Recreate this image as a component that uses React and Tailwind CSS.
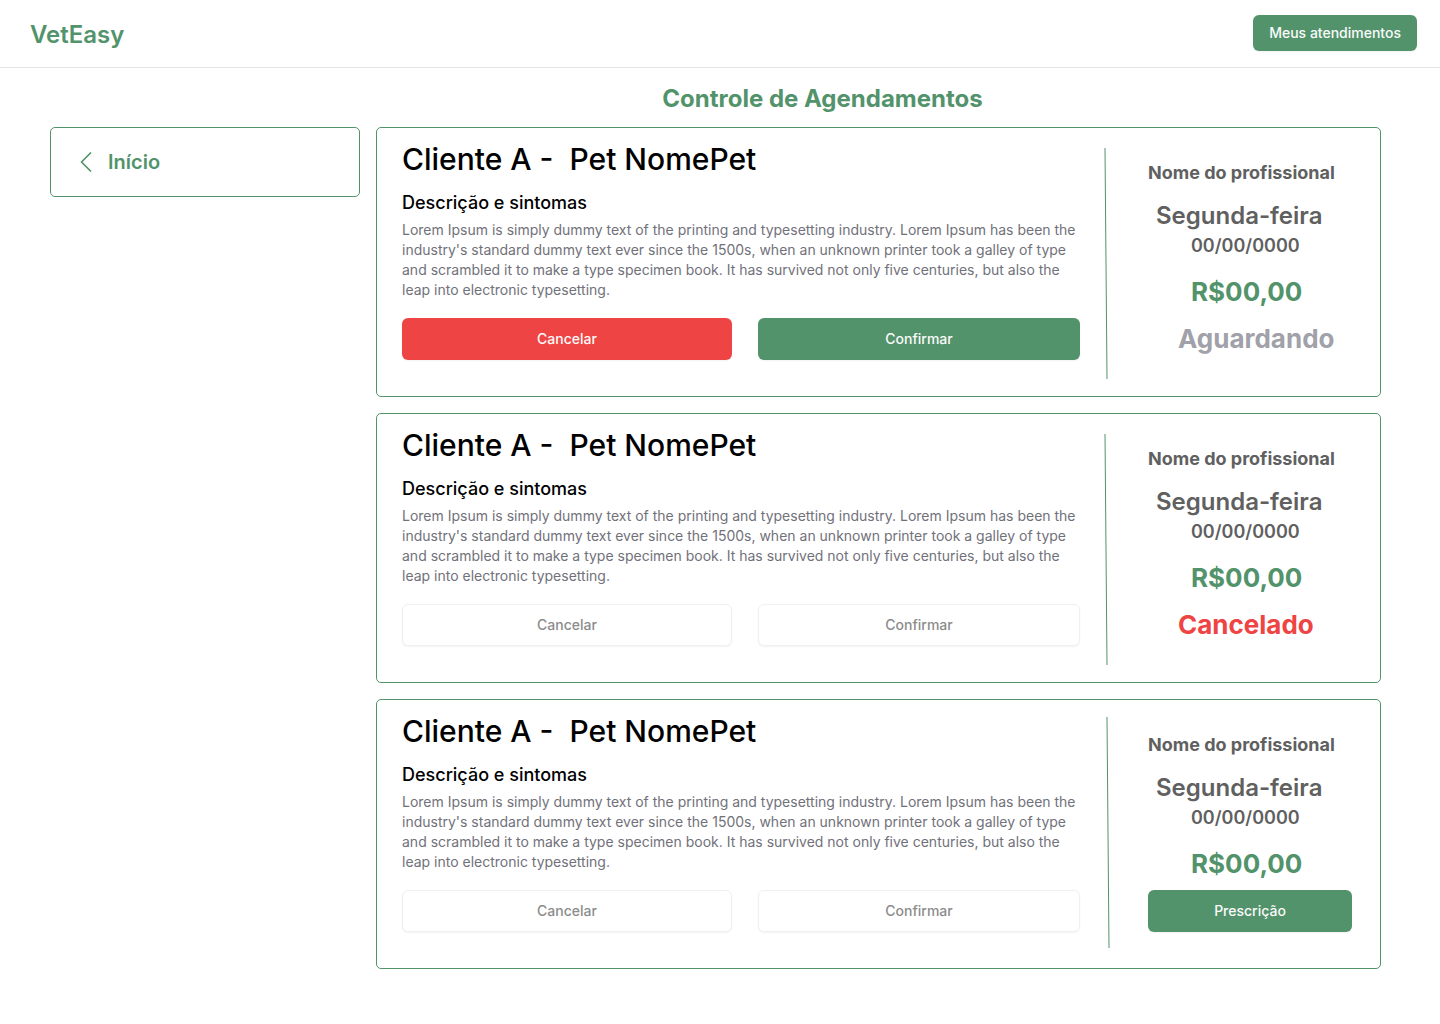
const DESCRIPTION =
  "Lorem Ipsum is simply dummy text of the printing and typesetting industry. Lorem Ipsum has been the industry's standard dummy text ever since the 1500s, when an unknown printer took a galley of type and scrambled it to make a type specimen book. It has survived not only five centuries, but also the leap into electronic typesetting.";

const appointments = [
  { id: 1, status: "pending" },
  { id: 2, status: "cancelled" },
  { id: 3, status: "done" },
];

function ActionButton({ tone, children }) {
  const base = "h-[42px] w-full rounded-md text-sm font-medium";
  const tones = {
    danger: "bg-[#ef4444] text-neutral-50 shadow-xs",
    primary: "bg-[#52936b] text-neutral-50 shadow-xs",
    disabled: "border border-[#f0f0f1] bg-white text-[#8c8c8c] shadow-xs",
  };
  return (
    <button type="button" disabled={tone === "disabled"} className={`${base} ${tones[tone]}`}>
      {children}
    </button>
  );
}

function Divider({ done }) {
  return (
    <svg
      className={`h-[231px] w-1 shrink-0 ${done ? "mt-[17px] ml-[26px] mr-[38px]" : "mt-5 ml-6 mr-10"}`}
      viewBox="0 0 4 231"
      fill="none"
      aria-hidden="true"
    >
      <path d="M1 0L3 231" stroke="#52936b" />
    </svg>
  );
}

function AppointmentCard({ status }) {
  const pending = status === "pending";
  const done = status === "done";
  return (
    <article className="flex items-start rounded-[5px] border border-[#52936b] pr-7 pl-[25px]">
      <div className="min-w-0 flex-1 pt-[13px] pb-9">
        <h2 className="text-3xl leading-9 font-medium whitespace-pre text-black">Cliente A -  Pet NomePet</h2>
        <h3 className="mt-3 text-lg leading-7 font-medium text-black">Descrição e sintomas</h3>
        <p className="mt-[3px] text-sm leading-5 text-[#71717a]">{DESCRIPTION}</p>
        <div className="mt-[18px] grid grid-cols-[330fr_322fr] gap-[26px]">
          <ActionButton tone={pending ? "danger" : "disabled"}>Cancelar</ActionButton>
          <ActionButton tone={pending ? "primary" : "disabled"}>Confirmar</ActionButton>
        </div>
      </div>
      <Divider done={done} />
      <aside className="flex w-[204px] shrink-0 flex-col pt-[31px] font-semibold text-[#606060]">
        <p className="text-lg leading-7 font-bold">Nome do profissional</p>
        <p className="mt-[13px] pl-2 text-2xl leading-8">Segunda-feira</p>
        <p className="pl-[43px] text-lg leading-7">00/00/0000</p>
        <p className="mt-4 pl-[43px] text-[26px] leading-8 font-bold text-[#52936b]">R$00,00</p>
        {pending && <p className="mt-[15px] pl-[30px] text-[26px] leading-8 font-bold text-[#a1a1aa]">Aguardando</p>}
        {status === "cancelled" && (
          <p className="mt-[15px] pl-[30px] text-[26px] leading-8 font-bold text-[#ef4444]">Cancelado</p>
        )}
        {done && (
          <div className="mt-2.5">
            <ActionButton tone="primary">Prescrição</ActionButton>
          </div>
        )}
      </aside>
    </article>
  );
}

export default function App() {
  return (
    <div className="min-h-screen bg-white font-['Inter',sans-serif]">
      <header className="flex h-[68px] items-center justify-between border-b border-[#e4e4e7] pr-[23px] pl-[30px]">
        <a href="#" className="pt-0.5 text-2xl leading-8 font-semibold text-[#52936b]">
          VetEasy
        </a>
        <button
          type="button"
          className="mb-px h-9 rounded-md bg-[#52936b] px-4 text-sm font-medium text-neutral-50 shadow-xs"
        >
          Meus atendimentos
        </button>
      </header>
      <div className="flex items-start gap-4 pr-[59px] pl-[50px]">
        <nav className="mt-[59px] w-[310px] shrink-0">
          <a
            href="#"
            className="flex h-[70px] items-center gap-4 rounded-[5px] border border-[#52936b] pl-[29px] text-xl leading-7 font-semibold text-[#52936b]"
          >
            <svg className="h-5 w-3" viewBox="0 0 12 20" fill="none" aria-hidden="true">
              <path d="M10.5 1L1.5 10L10.5 19" stroke="currentColor" strokeWidth="1.75" strokeLinecap="round" strokeLinejoin="round" />
            </svg>
            Início
          </a>
        </nav>
        <main className="min-w-0 flex-1 pt-[15px]">
          <h1 className="pr-28 text-center text-2xl leading-8 font-bold text-[#52936b]">Controle de Agendamentos</h1>
          <div className="mt-3 flex flex-col gap-4">
            {appointments.map((item) => (
              <AppointmentCard key={item.id} status={item.status} />
            ))}
          </div>
        </main>
      </div>
    </div>
  );
}
